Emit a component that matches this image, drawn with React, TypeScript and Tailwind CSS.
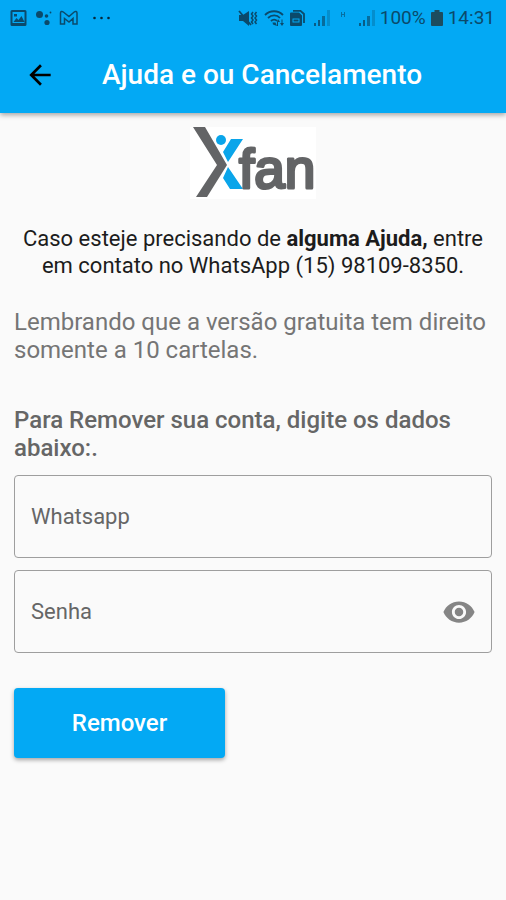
import { useState } from 'react';
import { MdArrowBack, MdRemoveRedEye } from 'react-icons/md';

const Signal = () => (
  <svg viewBox="0 0 18 18" className="h-[18px] w-[18px]" fill="currentColor" aria-hidden="true">
    <rect x="1" y="14" width="2" height="3" />
    <rect x="5" y="11" width="2" height="6" />
    <rect x="9" y="7" width="3" height="10" opacity="0.8" />
    <rect x="14" y="1" width="3" height="16" opacity="0.35" />
  </svg>
);

const StatusBar = () => (
  <div className="flex h-9 items-center justify-between pl-2 pr-[11px] text-[#0b4a6b]">
    <div className="flex items-center gap-[6px]">
      <svg viewBox="0 0 20 18" className="h-[18px] w-5" aria-hidden="true">
        <path fill="currentColor" fillRule="evenodd" d="M4 1h13a1.500 1.500 0 0 1 1.500 1.500v13a1.500 1.500 0 0 1-1.500 1.500H4a1.500 1.500 0 0 1-1.500-1.500v-13A1.500 1.500 0 0 1 4 1zm.5 2v11h12V3zM5.500 13l3-4 2 2 3-4 3 6zM6 5h3v2.500H6z" />
      </svg>
      <svg viewBox="0 0 18 18" className="h-[18px] w-[18px]" fill="currentColor" aria-hidden="true">
        <circle cx="5.500" cy="5.500" r="3.500" />
        <circle cx="12.500" cy="7" r="1.800" />
        <circle cx="16.500" cy="3.500" r="0.900" />
        <circle cx="13" cy="13.500" r="2.600" />
      </svg>
      <svg viewBox="0 0 20 18" className="h-[18px] w-5" fill="none" stroke="currentColor" strokeWidth="1.500" aria-hidden="true">
        <path d="M2.500 15V4c0-1.500 1.500-2 2.800-1L11 7.500 16.200 3c1.300-1 2.800-.5 2.800 1v11h-4V9.500L11 13 6.500 9.500V15z" />
      </svg>
      <svg viewBox="0 0 20 18" className="ml-2 h-[18px] w-5" fill="#05283c" aria-hidden="true">
        <circle cx="2.500" cy="9" r="1.300" />
        <circle cx="9.500" cy="9" r="1.300" />
        <circle cx="16.500" cy="9" r="1.300" />
      </svg>
    </div>
    <div className="flex items-center">
      <svg viewBox="0 0 20 18" className="h-[18px] w-5" aria-hidden="true">
        <path fill="currentColor" d="M1 6h4l6-4v15l-6-5H1z" />
        <path fill="none" stroke="currentColor" strokeWidth="1.800" d="M1 2l12 14" />
        <path fill="none" stroke="currentColor" strokeWidth="1.500" d="M15 3l-1.500 2 1.500 2-1.500 2 1.500 2-1.500 2 1.500 2M18.500 3L17 5l1.500 2L17 9l1.500 2-1.500 2 1.500 2" />
      </svg>
      <svg viewBox="0 0 22 18" className="ml-[6px] h-[18px] w-[22px]" fill="none" stroke="currentColor" strokeWidth="1.800" aria-hidden="true">
        <path d="M1 6c5-5 13-5 18 0M4 9c3.500-3.500 9-3.500 12 0M7 12c1.800-1.800 4.500-1.800 6 0" />
        <path fill="currentColor" stroke="none" d="M8.500 13.500h3L13 17l-4-1.500zM14 10l2 3h-2v4h-1v-4zM18 17l-2-3h1.500v-3.500h1V14H20z" />
      </svg>
      <svg viewBox="0 0 16 18" className="ml-[3px] h-[18px] w-4" aria-hidden="true">
        <path fill="none" stroke="currentColor" strokeWidth="1.800" d="M4 1.800h7.500L15 5v9" />
        <path fill="currentColor" fillRule="evenodd" d="M2 3.500h8l3 3V16a1 1 0 0 1-1 1H2a1 1 0 0 1-1-1V4.500a1 1 0 0 1 1-1zm1.500 6v4h7v-4zm1 1h5v2h-5z" />
      </svg>
      <span className="ml-2 opacity-80"><Signal /></span>
      <svg viewBox="0 0 8 18" className="ml-2 h-[18px] w-2 opacity-60" stroke="currentColor" strokeWidth="1" aria-hidden="true">
        <path d="M2.500 3v5M5.500 3v5M2.500 5.500h3" />
      </svg>
      <span className="ml-[11px] opacity-80"><Signal /></span>
      <span className="ml-1 text-[19px] leading-6">100%</span>
      <svg viewBox="0 0 12 18" className="ml-[5px] h-[18px] w-3" aria-hidden="true">
        <path fill="#1d4c5e" d="M3.500 1h5v2H11a1 1 0 0 1 1 1v12a1 1 0 0 1-1 1H1a1 1 0 0 1-1-1V4a1 1 0 0 1 1-1h2.500z" />
      </svg>
      <span className="ml-[5px] text-[19px] leading-6">14:31</span>
    </div>
  </div>
);

const Logo = () => (
  <svg viewBox="0 0 126 72" className="h-[72px] w-[126px] overflow-visible bg-white" role="img" aria-label="Xfan">
    <path fill="#636466" d="M3 0h12l22 38-20 32H6l21-32z" />
    <circle cx="31" cy="13" r="5" fill="#0aa5ea" />
    <path fill="#0aa5ea" d="M41 12h12L38 35l-5-10zM38 40l15 22H40l-7-11z" />
    <text
      x="49"
      y="61"
      fontFamily="'Liberation Sans', sans-serif"
      fontSize="55"
      fill="#636466"
      stroke="#636466"
      strokeWidth="3"
      strokeLinejoin="round"
    >
      fan
    </text>
  </svg>
);

const fieldClass =
  'peer h-[83px] w-full rounded-[4px] border border-[#9e9e9e] bg-transparent px-4 text-[22px] text-black/85 outline-none focus:border-[#03a9f4]';
const labelClass =
  'pointer-events-none absolute inset-y-0 left-[17px] flex items-center text-[22px] text-[#666] peer-focus:hidden peer-[:not(:placeholder-shown)]:hidden';

const App = () => {
  const [whatsapp, setWhatsapp] = useState('');
  const [password, setPassword] = useState('');
  const [showPassword, setShowPassword] = useState(false);

  return (
    <div className="min-h-screen bg-[#fafafa] font-[Roboto,sans-serif]">
      <header className="bg-[#03a9f4] shadow-[0_2px_5px_rgba(0,0,0,0.35)]">
        <StatusBar />
        <div className="flex h-[77px] items-center">
          <button type="button" aria-label="Voltar" className="ml-6 text-black">
            <MdArrowBack className="h-8 w-8" />
          </button>
          <h1 className="ml-[46px] text-[28px] font-medium leading-8 text-white">Ajuda e ou Cancelamento</h1>
        </div>
      </header>

      <main className="px-[14px] pt-[14px]">
        <div className="flex justify-center">
          <Logo />
        </div>

        <p className="mt-[26px] text-center text-[22px] leading-[27px] text-[#1c1c1c]">
          Caso esteje precisando de <b className="font-bold">alguma Ajuda,</b> entre em contato no WhatsApp (15) 98109-8350.
        </p>

        <p className="mt-[29px] text-2xl leading-7 text-[#757575]">
          Lembrando que a versão gratuita tem direito somente a 10 cartelas.
        </p>

        <form onSubmit={(e) => e.preventDefault()}>
          <p className="mt-[42px] text-2xl font-medium leading-7 text-[#666]">
            Para Remover sua conta, digite os dados abaixo:.
          </p>

          <div className="relative mt-[13px] flex">
            <input
              id="whatsapp"
              type="tel"
              placeholder=" "
              value={whatsapp}
              onChange={(e) => setWhatsapp(e.target.value)}
              className={fieldClass}
            />
            <label htmlFor="whatsapp" className={labelClass}>Whatsapp</label>
          </div>

          <div className="relative mt-3 flex">
            <input
              id="senha"
              type={showPassword ? 'text' : 'password'}
              placeholder=" "
              value={password}
              onChange={(e) => setPassword(e.target.value)}
              className={fieldClass}
            />
            <label htmlFor="senha" className={labelClass}>Senha</label>
            <button
              type="button"
              aria-label="Mostrar senha"
              onClick={() => setShowPassword(!showPassword)}
              className="absolute inset-y-0 right-4 flex items-center text-[#858585]"
            >
              <MdRemoveRedEye className="h-[34px] w-[34px]" />
            </button>
          </div>

          <button
            type="submit"
            className="mt-[35px] h-[70px] w-[211px] rounded-[4px] bg-[#03a9f4] text-2xl font-medium text-white shadow-[0_2px_4px_rgba(0,0,0,0.35)]"
          >
            Remover
          </button>
        </form>
      </main>
    </div>
  );
};

export default App;
